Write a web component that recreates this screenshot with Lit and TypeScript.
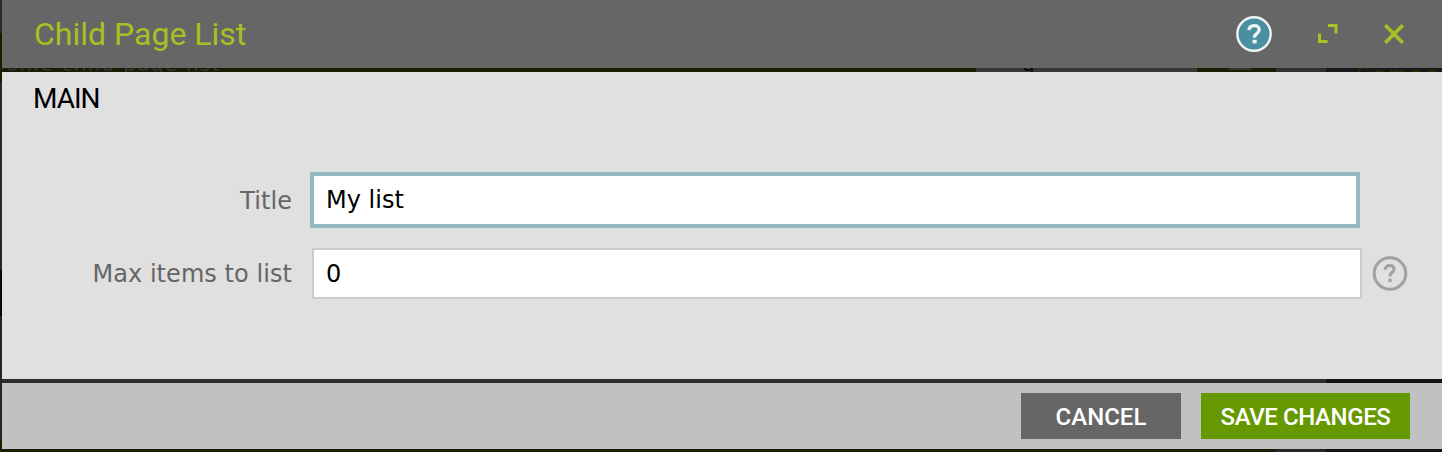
import { LitElement, html, css } from "lit";
import { customElement } from "lit/decorators.js";

@customElement("app-root")
export class AppRoot extends LitElement {
  static styles = css`
    :host {
      display: block;
      width: 1442px;
      height: 452px;
      overflow: hidden;
      box-sizing: border-box;
      padding-left: 2px;
      background: linear-gradient(#2b2b2d 0 33px, #171d00 33px 83px, #2b2b2d 83px 100px, #262627 270px, #080808 270px 316px, #262627 316px 440px, #171d00 440px);
      font-family: Roboto, sans-serif;
    }
    .dialog { display: flex; flex-direction: column; height: 452px; }
    header { height: 68px; flex: none; background: #666; display: flex; align-items: center; padding: 0 38px 0 32px; box-sizing: border-box; color: #a8c023; }
    h1 { margin: 0; font-weight: 400; font-size: 32px; line-height: 68px; letter-spacing: 0; flex: 1; white-space: nowrap; }
    svg { display: block; flex: none; }
    .help { margin-right: 45px; }
    .expand { margin-right: 46px; }
    .gap { height: 4px; flex: none; overflow: hidden; position: relative; }
    .upper { background: linear-gradient(90deg, #171d00 0 974px, #363636 974px 1195px, #171d00 1195px 1274px, #303031 1274px 1324px, #181818 1324px); }
    .lower { background: linear-gradient(90deg, #2d2b2d 0 1324px, #151214 1324px); }
    .under { position: absolute; bottom: -2px; font-family: "DejaVu Sans", sans-serif; font-size: 20px; line-height: 20px; white-space: nowrap; }
    .left { left: -10px; color: #34333a; letter-spacing: 1.3px; }
    .mid { left: 1020px; color: #080808; }
    .right { left: 1354px; color: #292f05; bottom: -12px; letter-spacing: 3px; }
    .chip { position: absolute; left: 1227px; top: 0; width: 22px; height: 2px; background: #34372c; }
    main { height: 307px; flex: none; background: #e0e0e0; box-sizing: border-box; padding-left: 31px; display: flex; flex-direction: column; }
    h2 { margin: 0; font-weight: 400; font-size: 28px; line-height: 54px; height: 100px; letter-spacing: -1px; color: #000; }
    .row { display: flex; align-items: center; font-family: "DejaVu Sans", sans-serif; font-size: 24px; }
    label { width: 259px; margin-right: 1px; text-align: right; color: #666; flex: none; white-space: nowrap; letter-spacing: 0.06px; }
    .first label { padding-top: 2px; }
    .field { box-sizing: border-box; width: 1050px; background: #fff; color: #000; display: flex; align-items: center; }
    .focus { height: 56px; border: 4px solid #93bac2; margin-left: 17px; padding-left: 12px; }
    .plain { height: 51px; border: 2px solid #ccc; margin-left: 19px; padding-left: 12px; }
    .second { margin-top: 20px; }
    .hint { margin-left: 10px; }
    footer { height: 66px; flex: none; background: #c1c1c1; display: flex; justify-content: flex-end; align-items: flex-start; gap: 20px; padding: 10px 32px 0 0; box-sizing: border-box; }
    button { border: 0; padding: 2px 0 0; height: 46px; color: #fff; font: 500 24px/44px Roboto, sans-serif; white-space: nowrap; }
    .cancel { width: 160px; background: #666; }
    .save { width: 209px; background: #690; letter-spacing: -0.4px; }
    .end { height: 3px; background: linear-gradient(90deg, #171d00 0 1274px, #262427 1274px 1324px, #151214 1324px); }
  `;

  render() {
    return html`
      <div class="dialog">
        <header>
          <h1><span>Child Page List</span></h1>
          <svg class="help" width="38" height="38" viewBox="0 0 38 38">
            <circle cx="19" cy="19" r="16.700" fill="#4a8fa1" stroke="#eef3f5" stroke-width="2.400" />
            <path d="M14 15.200c.2-3 2.200-4.600 5.200-4.600s5 1.600 5 4.100c0 3.700-4.600 3.900-4.600 7.200v.8" fill="none" stroke="#eef3f5" stroke-width="3.400" />
            <rect x="17.500" y="24.800" width="4.200" height="3.600" fill="#eef3f5" />
          </svg>
          <svg class="expand" width="20" height="20" viewBox="0 0 20 20" fill="none" stroke="#a8c023" stroke-width="3">
            <path d="M10 1.500h8v8M1.500 9.500v8h8" />
          </svg>
          <svg width="20" height="20" viewBox="0 0 20 20" stroke="#a8c023" stroke-width="3.600">
            <path d="M1.200 1.200l17.600 17.600M18.800 1.200L1.200 18.800" />
          </svg>
        </header>
        <div class="gap upper">
          <span class="under left">Some child page list</span>
          <span class="under mid">g</span>
          <span class="chip"></span>
          <span class="under right">Compo</span>
        </div>
        <main>
          <h2><span>MAIN</span></h2>
          <div class="row first"><label>Title</label><div class="field focus">My list</div></div>
          <div class="row second">
            <label>Max items to list</label><div class="field plain">0</div>
            <svg class="hint" width="36" height="36" viewBox="0 0 36 36">
              <circle cx="18" cy="17.500" r="15.800" fill="none" stroke="#a1a1a1" stroke-width="3" />
              <path d="M13.300 13.700c.1-2.700 1.800-4.200 4.400-4.200s4.300 1.500 4.300 3.700c0 3.200-4 3.400-4 6.500v.8" fill="none" stroke="#a1a1a1" stroke-width="3" />
              <rect x="16.300" y="22.700" width="3.400" height="3.400" fill="#a1a1a1" />
            </svg>
          </div>
        </main>
        <div class="gap lower"></div>
        <footer>
          <button class="cancel"><span>CANCEL</span></button>
          <button class="save"><span>SAVE CHANGES</span></button>
        </footer>
        <div class="end"></div>
      </div>
    `;
  }
}
